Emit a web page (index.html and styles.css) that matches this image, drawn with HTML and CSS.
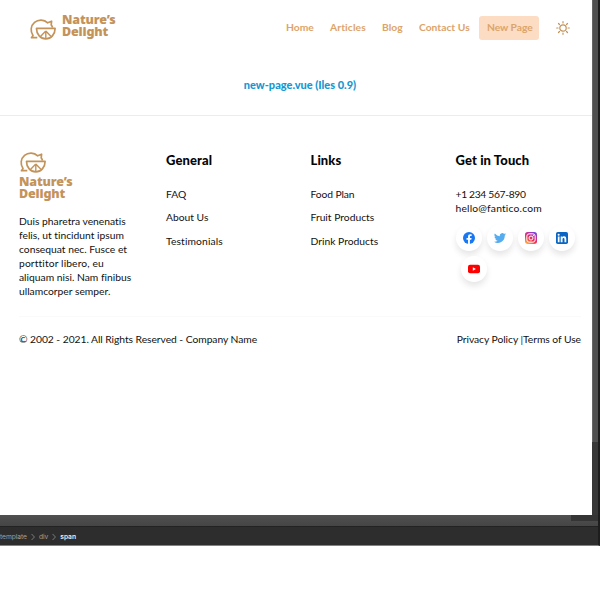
FILE: index.html
```html
<!DOCTYPE html>
<html lang="en">
<head>
<meta charset="utf-8">
<title>Nature’s Delight</title>
<link rel="stylesheet" href="styles.css">
</head>
<body>
<svg class="defs" width="0" height="0" aria-hidden="true">
  <symbol id="fruit" viewBox="0 0 27 22">
    <g fill="none" stroke="#c4935a" stroke-width="1.7" stroke-linejoin="round">
      <path d="M8.300 18.700H2.500L4 16.500A9.750 9.750 0 0 1 18.700 3.800L22.600 2.200 22.200 5.900C23 6.800 23.300 7.700 23.500 8.700"/>
      <path d="M7.500 9.400H26.100C26.100 15.500 22 19.900 16.800 19.900S7.500 15.500 7.500 9.400Z"/>
      <path d="M16.800 12.500V19.500M16.800 12L11.700 17.300M16.800 12L21.900 17.300" stroke-width="1.400"/>
    </g>
  </symbol>
</svg>
<div class="window">
  <div class="upper">
    <div class="page">
      <header class="header">
        <a class="brand"><svg class="fruit"><use href="#fruit"/></svg><span class="brand-name">Nature’s<br>Delight</span></a>
        <nav class="nav">
          <a class="home">Home</a><a class="articles">Articles</a><a class="blog">Blog</a><a class="contact">Contact Us</a><a class="active">New Page</a>
        </nav>
        <svg class="sun" viewBox="0 0 14 14" fill="none" stroke="#c4935a" stroke-width="1.200" stroke-linecap="round"><circle cx="7" cy="7" r="3.200"/><path d="M7 .7V2M7 12V13.300M.7 7H2M12 7H13.300M2.500 2.500L3.500 3.500M10.500 10.500L11.500 11.500M2.500 11.500L3.500 10.500M10.500 3.500L11.500 2.500"/></svg>
      </header>
      <main class="main"><span>new-page.vue (Iles 0.9)</span></main>
      <footer class="footer">
        <div class="columns">
          <section class="about">
            <svg class="fruit"><use href="#fruit"/></svg>
            <span class="brand-name">Nature’s<br>Delight</span>
            <p>Duis pharetra venenatis<br>felis, ut tincidunt ipsum<br>consequat nec. Fusce et<br><span class="loose">porttitor libero, eu</span><br>aliquam nisi. Nam finibus<br>ullamcorper semper.</p>
          </section>
          <section>
            <h2>General</h2>
            <ul><li>FAQ</li><li>About Us</li><li class="loose">Testimonials</li></ul>
          </section>
          <section>
            <h2>Links</h2>
            <ul><li class="food">Food Plan</li><li>Fruit Products</li><li>Drink Products</li></ul>
          </section>
          <section>
            <h2>Get in Touch</h2>
            <div class="details"><span class="phone">+1 234 567-890</span><br><span class="email">hello@fantico.com</span></div>
            <div class="social">
              <a><svg viewBox="0 0 24 24"><circle cx="12" cy="12" r="12" fill="#1877f2"/><path fill="#fff" d="M10.100 24v-8.400H7v-3.500h3.100V9.400c0-3 1.800-4.700 4.500-4.700 1.300 0 2.700.2 2.700.2V8h-1.500c-1.500 0-2 .9-2 1.900v2.200h3.400l-.6 3.500h-2.800V24z"/></svg></a>
              <a><svg viewBox="0 0 24 24"><path fill="#55acee" d="M24 4.600a10 10 0 0 1-2.800.8 5 5 0 0 0 2.100-2.700 10 10 0 0 1-3.100 1.200 4.900 4.900 0 0 0-8.400 4.500A14 14 0 0 1 1.700 3.100a4.900 4.900 0 0 0 1.500 6.600 5 5 0 0 1-2.200-.6 4.900 4.900 0 0 0 3.900 4.900 5 5 0 0 1-2.200.1 4.900 4.900 0 0 0 4.600 3.400A10 10 0 0 1 0 19.500a14 14 0 0 0 21.500-12.400A10 10 0 0 0 24 4.600z"/></svg></a>
              <a><svg viewBox="0 0 24 24"><defs><linearGradient id="ig" x1=".2" y1="1" x2=".8" y2="0"><stop offset="0" stop-color="#ffb13d"/><stop offset=".4" stop-color="#f0324f"/><stop offset=".7" stop-color="#c42d9b"/><stop offset="1" stop-color="#7044e0"/></linearGradient></defs><rect width="24" height="24" rx="5.500" fill="url(#ig)"/><g fill="none" stroke="#fff" stroke-width="2"><rect x="3.700" y="3.700" width="16.600" height="16.600" rx="4.500"/><circle cx="12" cy="12" r="4"/></g><circle cx="16.800" cy="7.200" r="1.200" fill="#fff"/></svg></a>
              <a><svg viewBox="0 0 24 24"><rect width="24" height="24" rx="3.500" fill="#0a66c2"/><path fill="#fff" d="M3.600 9h3.500v11.400H3.600zM5.300 3.300a2.100 2.100 0 1 1 0 4.200 2.100 2.100 0 0 1 0-4.200zM9.400 9h3.400v1.600c.5-.9 1.700-1.900 3.400-1.900 3.600 0 4.300 2.400 4.300 5.500v6.200H17v-5.500c0-1.300 0-3-1.900-3s-2.100 1.400-2.100 2.900v5.600H9.400z"/></svg></a>
              <a class="youtube"><svg viewBox="0 0 24 24"><rect y="3.500" width="24" height="17" rx="4" fill="#f00"/><path fill="#fff" d="M9.600 8.400v7.200l6.200-3.600z"/></svg></a>
            </div>
          </section>
        </div>
        <div class="legal"><span>© 2002 - 2021. All Rights Reserved - Company Name</span><span>Privacy Policy |Terms of Use</span></div>
      </footer>
    </div>
    <div class="vscroll"><div class="vthumb"></div></div>
  </div>
  <div class="hscroll"><div class="hthumb"></div></div>
  <div class="crumbs">
    <span>template</span><svg viewBox="0 0 5 9"><path d="M.7.7L4.300 4.500.7 8.300"/></svg><span>div</span><svg viewBox="0 0 5 9"><path d="M.7.7L4.300 4.500.7 8.300"/></svg><b>span</b>
  </div>
</div>
</body>
</html>
```
FILE: styles.css
```css
* { box-sizing: border-box; }
body {
  margin: 0;
  background: #fff;
  color: #111;
  font: 10.3px/14px Lato, sans-serif;
  font-variant-ligatures: none;
}
.defs { position: absolute; }
h2, p, ul { margin: 0; padding: 0; }
.window {
  width: 600px;
  height: 546px;
  background: #2d2d2d;
  border-right: 2px solid #1d1d1d;
  border-bottom: 1px solid #828282;
}
.upper { display: flex; height: 515px; }
.page { width: 592px; background: #fff; }

.header { display: flex; align-items: center; height: 56px; padding: 0 22px 0 29px; }
.brand { display: flex; width: 250px; gap: 6px; }
.fruit { display: block; width: 27px; height: 22px; }
.brand .fruit { margin-top: 4px; }
.brand-name {
  display: block;
  color: #c4935a;
  font-family: "Noto Sans", sans-serif;
  font-weight: 900;
  font-size: 12.5px;
  line-height: 12px;
  letter-spacing: -0.15px;
}
.brand .brand-name { margin-top: -1px; }
.nav { display: flex; color: #dda46a; font-weight: 700; }
.nav a { height: 24px; padding: 4.4px 0; white-space: nowrap; }
.home { width: 44px; }
.nav .home { margin-left: 7px; }
.articles { width: 52px; letter-spacing: 0.1px; }
.blog { width: 37px; }
.contact { width: 60px; }
.nav .active { width: 60px; padding-left: 8px; border-radius: 3px; background: #fcdcc3; letter-spacing: -0.05px; }
.sun { width: 14px; height: 14px; margin-left: auto; }

.main { height: 59px; padding-top: 22px; text-align: center; color: #1598d2; font-size: 11px; font-weight: 900; }
.main span { margin-left: 8px; }
.footer { padding: 0 11px 0 19px; border-top: 1px solid #ececec; }
.columns { display: grid; grid-template-columns: 147px 144.500px 145px 126px; height: 201px; padding-top: 36px; border-bottom: 1px solid #fafafa; }
.about .brand-name { margin-top: 2px; }
.about p { margin-top: 14px; white-space: nowrap; }
.loose { letter-spacing: 0.12px; }
h2 { height: 35px; color: #050505; font-weight: 900; font-size: 13px; line-height: 16px; letter-spacing: 0.1px; }
ul { list-style: none; }
li { height: 23.300px; }
.food { letter-spacing: -0.1px; }
.phone { letter-spacing: -0.34px; }
.email { letter-spacing: 0.18px; }
.social { display: flex; flex-wrap: wrap; gap: 5px; padding-top: 10px; }
.social a { display: flex; width: 26px; height: 26px; align-items: center; justify-content: center; border-radius: 50%; background: #fff; box-shadow: 0 4px 6px rgba(0, 0, 0, 0.1); }
.social svg { width: 12px; height: 12px; }
.social .youtube { margin-left: 5px; }
.legal { display: flex; justify-content: space-between; padding-top: 15px; letter-spacing: -0.05px; }

.vscroll { width: 6px; background: #383838; }
.vthumb { height: 442px; background: #505050; border-left: 1px solid #666; }
.hscroll { height: 12px; background: linear-gradient(#505050, #454545); border-bottom: 1px solid #222; }
.hthumb { width: 27px; height: 6px; margin-left: 571px; background: #353535; }
.crumbs { display: flex; align-items: center; height: 19px; gap: 4px; padding-top: 1px; overflow: hidden; color: #a0a0a0; font: 6.7px/19px Inter, sans-serif; letter-spacing: -0.05px; }
.crumbs svg { width: 4px; height: 8px; fill: none; stroke: #999; stroke-width: 0.9; }
.crumbs b { color: #eee; font-weight: 600; }
```
